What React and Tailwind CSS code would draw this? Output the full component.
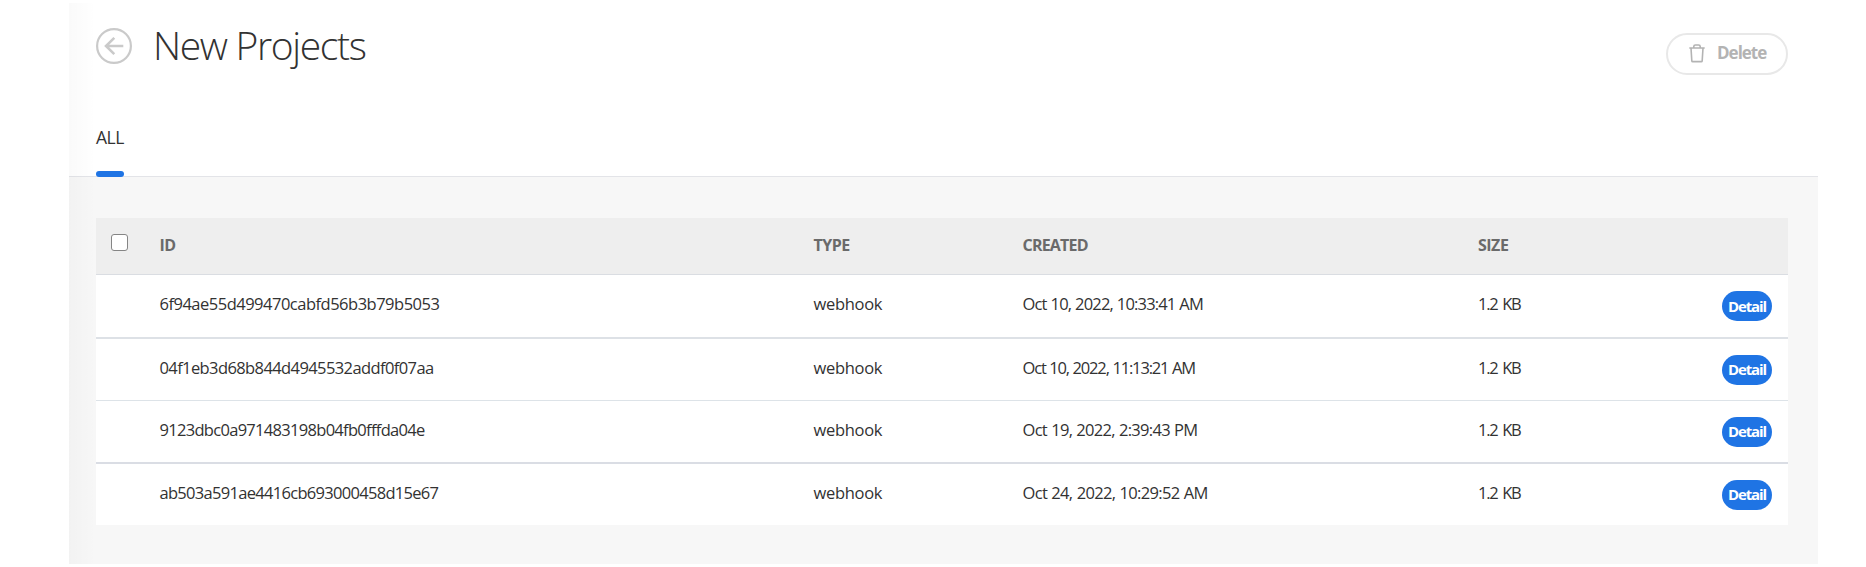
const rows = [
  { id: "6f94ae55d499470cabfd56b3b79b5053", idSpacing: "tracking-[-0.5px]", created: "Oct 10, 2022, 10:33:41 AM", tracking: "tracking-[-0.84px]", height: "h-[62px]", offset: "-mt-[3px]", border: "border-t border-[#dadde2]" },
  { id: "04f1eb3d68b844d4945532addf0f07aa", idSpacing: "tracking-[-0.6px]", created: "Oct 10, 2022, 11:13:21 AM", tracking: "tracking-[-1.16px]", height: "h-[61px]", offset: "-mt-[2px]", border: "border-t-2 border-[#dde1e6]" },
  { id: "9123dbc0a971483198b04fb0fffda04e", idSpacing: "tracking-[-0.7px]", created: "Oct 19, 2022, 2:39:43 PM", tracking: "tracking-[-0.69px]", height: "h-[61px]", offset: "-mt-[2px]", border: "border-t border-[#dde3e8]" },
  { id: "ab503a591ae4416cb693000458d15e67", idSpacing: "tracking-[-0.7px]", created: "Oct 24, 2022, 10:29:52 AM", tracking: "tracking-[-0.65px]", height: "h-[61px]", offset: "-mt-[2px]", border: "border-t-2 border-[#dadde4]" },
];

const columns = "grid grid-cols-[63.5px_654px_209px_455.5px_1fr_66px]";

function BackIcon() {
  return (
    <svg className="mt-px" width="36" height="36" viewBox="0 0 36 36" fill="none" stroke="#cacaca">
      <circle cx="18" cy="18" r="16.9" strokeWidth="2.2" />
      <path d="M27.3 18H10M18.3 9.8L10 18l8.3 8.2" strokeWidth="2.6" />
    </svg>
  );
}

function TrashIcon() {
  return (
    <svg className="-mt-px" width="16" height="19" viewBox="0 0 16 19" fill="none" stroke="#b3b3b3" strokeWidth="1.6">
      <path d="M.3 4h15.4M4.8 4V2.6Q4.8 1 6.4 1h3.2q1.6 0 1.6 1.6V4M2 4l.8 12.8q.1.8.9.8h8.6q.8 0 .9-.8L14 4" />
    </svg>
  );
}

export default function App() {
  return (
    <div className="h-[567px] overflow-hidden bg-white pt-[3px] pl-[69px] font-['Open_Sans',sans-serif] text-[#323232]">
      <main className="relative flex h-[561px] w-[1749px] flex-col bg-[#f7f7f7]">
        <header className="flex h-[174px] flex-col justify-between border-b border-[#e3e4e8] bg-white pr-[30px] pl-[27px]">
          <div className="flex items-start justify-between">
            <div className="flex items-center gap-[21px] pt-[24px]">
              <BackIcon />
              <h1 className="-mt-[2px] text-[39px] leading-[36px] font-light tracking-[-1.35px]">New Projects</h1>
            </div>
            <button className="mt-[30px] flex h-[42px] w-[122px] items-center rounded-full border-2 border-[#e8e8e8] pl-[21px] text-[#b3b3b3]">
              <TrashIcon />
              <span className="-mt-[2px] ml-[12px] text-[17px] leading-5 font-bold tracking-[-1px]">Delete</span>
            </button>
          </div>
          <div className="-mb-px flex w-[28px] flex-col">
            <span className="mb-[22px] text-[17.5px] leading-6 tracking-[-0.5px]">ALL</span>
            <span className="h-[6px] rounded-full bg-[#1f74e4]" />
          </div>
        </header>

        <section className="mt-[41px] ml-[27px] w-[1692px]">
          <div className={`${columns} h-[56px] items-center bg-[#eeeeee] text-[16px] font-bold text-[#6a6a6a]`}>
            <span className="mb-[8px] ml-[15px] size-[17px] rounded-[3px] border border-[#858585] bg-white" />
            <span className="-mt-[2px] tracking-[-0.6px]">ID</span>
            <span className="-mt-[2px] tracking-[-0.5px]">TYPE</span>
            <span className="-mt-[2px] tracking-[-0.8px]">CREATED</span>
            <span className="-mt-[2px] tracking-[-0.5px]">SIZE</span>
          </div>
          {rows.map((row) => (
            <div key={row.id} className={`${columns} ${row.height} ${row.border} box-content items-center bg-white text-[16.5px] whitespace-nowrap`}>
              <span />
              <span className={`${row.offset} ${row.idSpacing}`}>{row.id}</span>
              <span className={`${row.offset} tracking-[-0.3px]`}>webhook</span>
              <span className={`${row.offset} [word-spacing:0.5px] ${row.tracking}`}>{row.created}</span>
              <span className={`${row.offset} tracking-[-1.2px] [word-spacing:1.5px]`}>1.2 KB</span>
              <button className="h-[30px] w-[50px] rounded-full bg-[#1f74e4] text-[15px] leading-[29px] font-bold tracking-[-1.15px] text-white">Detail</button>
            </div>
          ))}
        </section>
        <div className="pointer-events-none absolute inset-y-0 left-0 w-[27px] bg-linear-to-r from-black/[0.02] to-transparent" />
      </main>
    </div>
  );
}
